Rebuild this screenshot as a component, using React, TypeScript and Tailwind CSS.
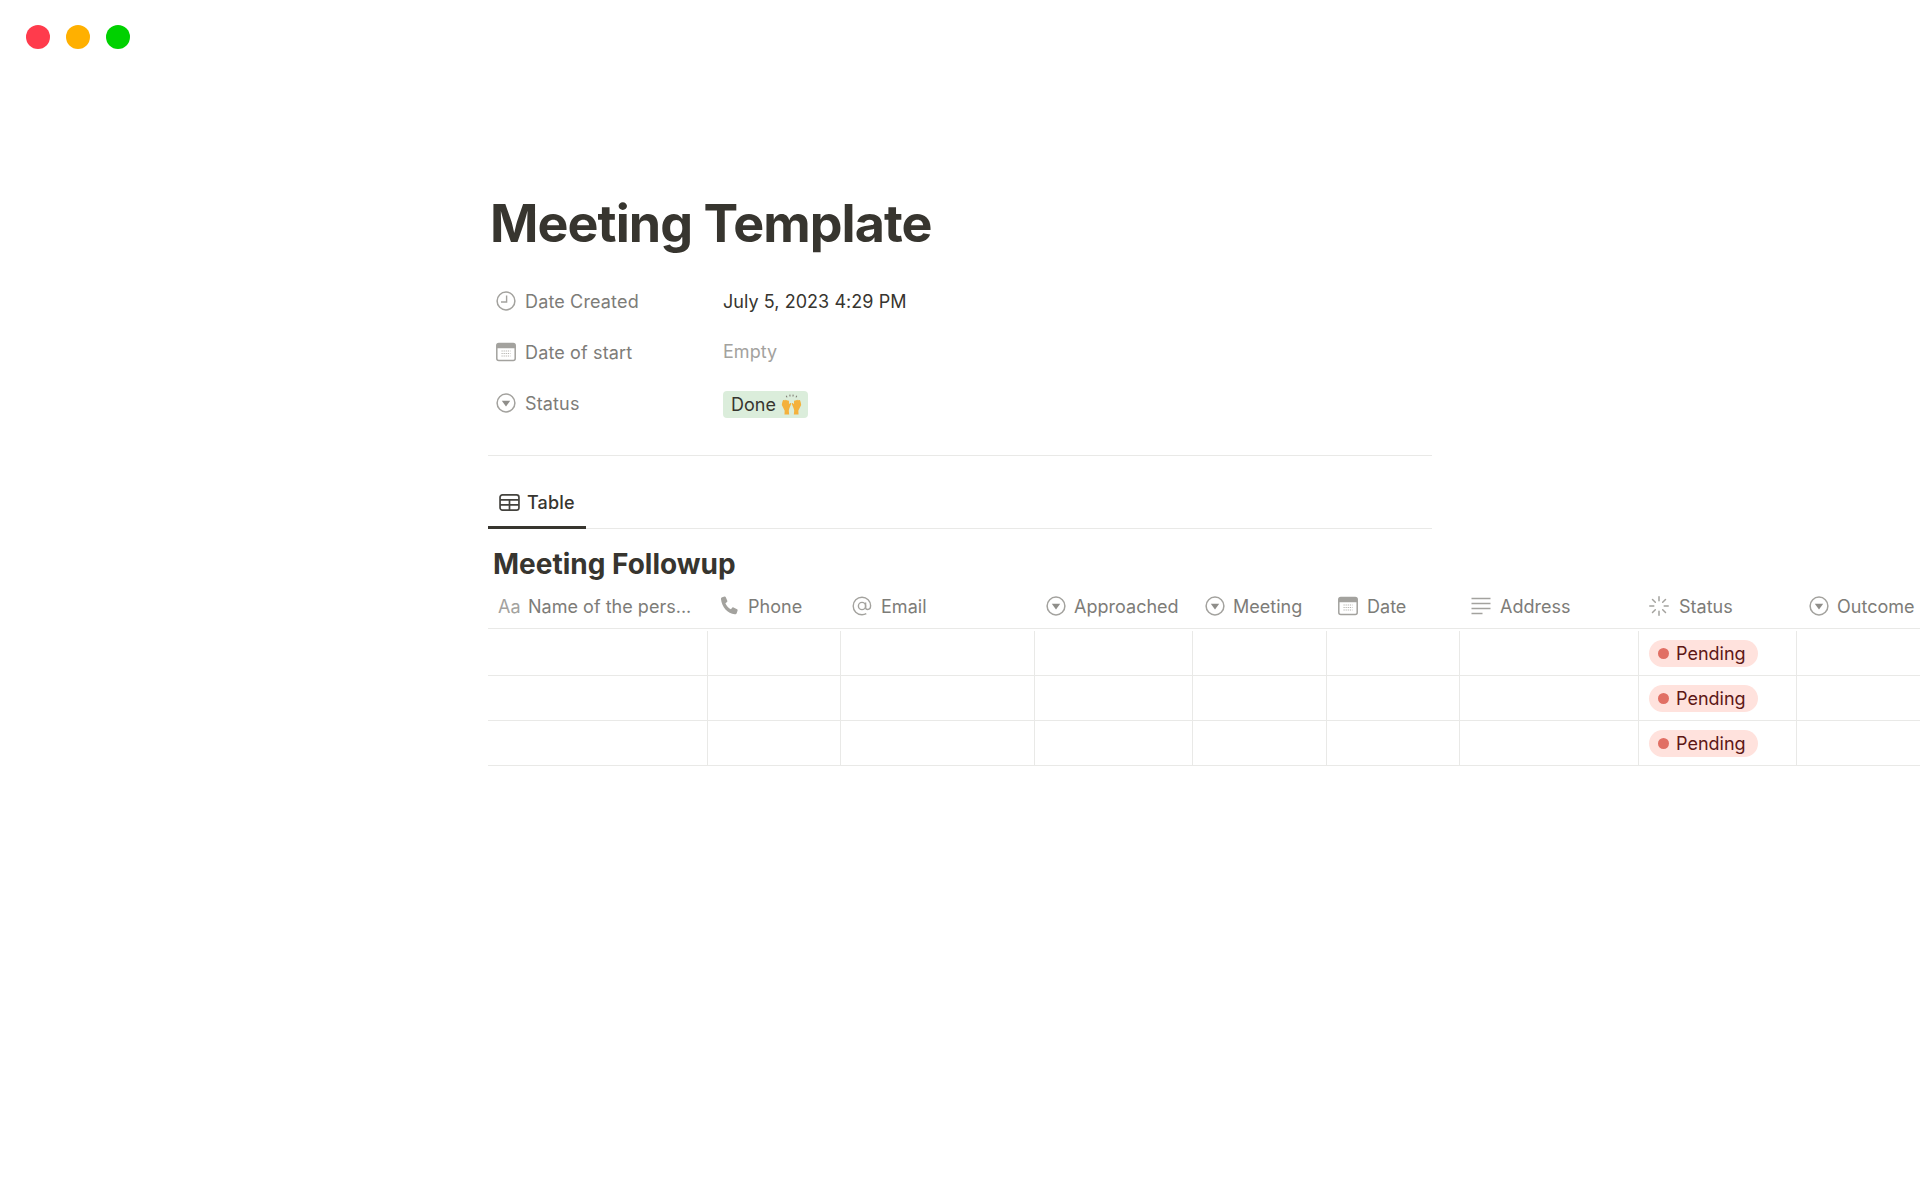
const ClockIcon = ({ className = '' }: { className?: string }) => (
  <svg viewBox="0 0 20 20" className={className} fill="none" stroke="#a3a29e" strokeWidth="1.5">
    <circle cx="10" cy="10" r="8.9" />
    <path d="M10.6 4.400V11H5" strokeWidth="1.4" />
  </svg>
);

const CalendarIcon = ({ className = '' }: { className?: string }) => (
  <svg viewBox="0 0 20 20" className={className}>
    <rect x=".8" y="1.400" width="18.400" height="17.200" rx="2" fill="#fff" stroke="#a3a29e" strokeWidth="1.500" />
    <path d="M.8 3.400a2 2 0 0 1 2-2h14.400a2 2 0 0 1 2 2v2.800H.8z" fill="#a3a29e" />
    <path d="M5.500 9h9M5.500 11.500h9M5.500 14h9" stroke="#b5b4b0" strokeWidth="1.200" strokeDasharray="1.200 .9" />
  </svg>
);

const SelectIcon = ({ className = '' }: { className?: string }) => (
  <svg viewBox="0 0 20 20" className={className} fill="none">
    <circle cx="10" cy="10" r="8.900" stroke="#a3a29e" strokeWidth="1.500" />
    <path d="M5.800 7.800h8.400L10 13.400z" fill="#8f8e8a" />
  </svg>
);

const TableIcon = ({ className = '' }: { className?: string }) => (
  <svg viewBox="0 0 22 18" className={className} fill="none" stroke="#44433e" strokeWidth="1.800">
    <rect x="1" y="1" width="20" height="16" rx="2.500" />
    <path d="M1 6.200h20M1 11.600h20M11 6.200V17" />
  </svg>
);

const PhoneIcon = ({ className = '' }: { className?: string }) => (
  <svg viewBox="0 0 20 20" className={className}>
    <path
      d="M3.200 1.200 5.600.6c.6-.1 1 .1 1.200.6l1.500 3.600c.2.500.1.900-.3 1.200L6.400 7.200c.9 2.300 3.100 4.800 5.500 6l1.300-1.500c.4-.4.800-.5 1.300-.3l3.600 1.800c.5.200.7.700.5 1.200l-.8 2.500c-.3.900-1.100 1.400-2 1.300C8.600 17.400 2.800 11 2 3.200c-.1-.9.300-1.700 1.200-2z"
      fill="#a3a29e"
    />
  </svg>
);

const AtIcon = ({ className = '' }: { className?: string }) => (
  <svg viewBox="0 0 20 20" className={className} fill="none" stroke="#a3a29e" strokeWidth="1.400">
    <circle cx="10" cy="10" r="3.600" />
    <path d="M13.600 6.400V11.300c0 1.300.9 2.200 2.100 2.200 1.500 0 2.900-1.400 2.900-3.900C18.600 5 14.900 1.300 10 1.300S1.200 5.100 1.200 10 5 18.700 10 18.700c1.700 0 3-.3 4.300-1" />
  </svg>
);

const LinesIcon = ({ className = '' }: { className?: string }) => (
  <svg viewBox="0 0 20 18" className={className} stroke="#a3a29e" strokeWidth="1.500">
    <path d="M.5 1.500h19M.5 6.500h19M.5 11.500h19M.5 16.500h11" />
  </svg>
);

const SpinnerIcon = ({ className = '' }: { className?: string }) => (
  <svg viewBox="0 0 20 20" className={className} stroke="#a3a29e" strokeWidth="1.500" strokeLinecap="round">
    <path d="M10 .8v4M10 15.200v4M.8 10h4M15.200 10h4M3.500 3.500l2.800 2.800M13.700 13.700l2.800 2.800M3.500 16.500l2.800-2.800M13.700 6.300l2.800-2.800" />
  </svg>
);

// raising hands emoji, the font has none
const RaisedHands = () => (
  <svg viewBox="0 0 20 20" className="h-[21px] w-[21px]">
    <path
      d="M.8 10.500c0-.8.4-3.200 1-4.400.4-.7 1.200-.5 1.300.2.300-1 1.400-1 1.600-.1.400-.8 1.500-.6 1.600.3.500-.5 1.300-.2 1.300.6v2.600l1-1c.7-.5 1.400.2 1 1L8 13.500l-.6 2.500.4 3.500H3.300l.2-3.500z"
      fill="#f4b13c"
    />
    <path
      d="M19.200 10.500c0-.8-.4-3.200-1-4.400-.4-.7-1.200-.5-1.300.2-.3-1-1.400-1-1.600-.1-.4-.8-1.500-.6-1.600.3-.5-.5-1.300-.2-1.300.6v2.600l-1-1c-.7-.5-1.400.2-1 1l1.600 3.800.6 2.500-.4 3.500h4.500l-.2-3.500z"
      fill="#f4b13c"
    />
    <path d="M5 1.600 5.700 3.200M8.400.6l.2 1.800M11.600.6l-.2 1.800M15 1.600l-.7 1.600" stroke="#7d7a70" strokeWidth="1" />
  </svg>
);

const properties = [
  { Icon: ClockIcon, label: 'Date Created' },
  { Icon: CalendarIcon, label: 'Date of start' },
  { Icon: SelectIcon, label: 'Status' },
];

const columns = [
  { label: 'Name of the pers...', width: 'w-[220px]', pad: 'pl-[10px]', icon: <span className="w-[24px] shrink-0 text-[18px] text-[#a3a29e]">Aa</span>, gap: 'gap-[6px]' },
  { label: 'Phone', width: 'w-[133px]', pad: 'pl-[11px]', icon: <PhoneIcon className="h-5 w-5 shrink-0" />, gap: 'gap-[9px]' },
  { label: 'Email', width: 'w-[194px]', pad: 'pl-[11px]', icon: <AtIcon className="h-5 w-5 shrink-0" />, gap: 'gap-[9px]' },
  { label: 'Approached', width: 'w-[158px]', pad: 'pl-[11px]', icon: <SelectIcon className="h-5 w-5 shrink-0" />, gap: 'gap-[8px]' },
  { label: 'Meeting', width: 'w-[134px]', pad: 'pl-[12px]', icon: <SelectIcon className="h-5 w-5 shrink-0" />, gap: 'gap-[8px]' },
  { label: 'Date', width: 'w-[133px]', pad: 'pl-[11px]', icon: <CalendarIcon className="h-5 w-5 shrink-0" />, gap: 'gap-[9px]' },
  { label: 'Address', width: 'w-[179px]', pad: 'pl-[11px]', icon: <LinesIcon className="h-[18px] w-5 shrink-0" />, gap: 'gap-[9px]' },
  { label: 'Status', width: 'w-[158px]', pad: 'pl-[10px]', icon: <SpinnerIcon className="h-5 w-5 shrink-0" />, gap: 'gap-[10px]' },
  { label: 'Outcome', width: 'w-[150px]', pad: 'pl-[12px]', icon: <SelectIcon className="h-5 w-5 shrink-0" />, gap: 'gap-[8px]' },
];

const App = () => {
  return (
    <div className="h-[1200px] w-[1920px] overflow-hidden bg-white font-['Inter',sans-serif] text-[#37352f]">
      {/* window buttons */}
      <div className="flex gap-[16px] pl-[26px] pt-[25px]">
        <span className="h-6 w-6 rounded-full bg-[#ff3b4c]" />
        <span className="h-6 w-6 rounded-full bg-[#ffb000]" />
        <span className="h-6 w-6 rounded-full bg-[#00d100]" />
      </div>

      <div className="ml-[488px] w-[1432px] pt-[140px]">
        <h1 className="pl-[2px] text-[52px] font-bold leading-[70px] tracking-[-0.95px] text-[#37352f]">
          Meeting Template
        </h1>

        <div className="mt-[22px] flex flex-col gap-[11px]">
          {properties.map(({ Icon, label }, i) => (
            <div key={label} className="flex h-[40px] items-center pl-[8px]">
              <Icon className="h-5 w-5 shrink-0" />
              <span className="ml-[9px] w-[198px] text-[18px] tracking-[0.15px] text-[#7d7c78]">{label}</span>
              {i === 0 && <span className="text-[18px] tracking-[0.05px] text-[#37352f]">July 5, 2023 4:29 PM</span>}
              {i === 1 && <span className="pb-[1px] text-[18px] tracking-[0.05px] text-[#a3a29e]">Empty</span>}
              {i === 2 && (
                <span className="mt-[2px] flex h-[27px] items-center gap-[5px] rounded-[4px] bg-[#dbeddb] pl-2 pr-[6px] text-[18px] text-[#37352f]">
                  Done
                  <RaisedHands />
                </span>
              )}
            </div>
          ))}
        </div>

        <div className="mt-[32px] h-px w-[944px] bg-[#e9e9e7]" />

        <div className="mt-[23px] w-[944px] border-b border-[#e9e9e7]">
          <div className="-mb-px flex h-[50px] w-[98px] items-center gap-[7px] border-b-[3px] border-[#37352f] pl-[11px] text-[18px] font-medium tracking-[0.15px]">
            <TableIcon className="h-[17px] w-[21px] shrink-0" />
            Table
          </div>
        </div>

        <h2 className="mt-[17px] pl-[5px] text-[28px] font-bold leading-[36px]">Meeting Followup</h2>

        <div className="mt-[4px] flex h-[43px] w-[1432px] border-b border-[#e9e9e7] pb-[2px]">
          {columns.map((col) => (
            <div
              key={col.label}
              className={`flex shrink-0 items-center text-[18px] tracking-[0.02px] text-[#7d7c78] ${col.width} ${col.gap} ${col.pad}`}
            >
              {col.icon}
              <span className="whitespace-nowrap">{col.label}</span>
            </div>
          ))}
        </div>

        <div className="mt-[2px]">
          {[0, 1, 2].map((row) => (
            <div key={row} className="flex h-[45px] w-[1432px] border-b border-[#e9e9e7]">
              {columns.map((col) => (
                <div key={col.label} className={`flex shrink-0 items-center border-r border-[#e9e9e7] pl-[10px] ${col.width}`}>
                  {col.label === 'Status' && (
                    <span className="flex h-[27px] items-center gap-[7px] rounded-full bg-[#ffe2dd] pl-[9px] pr-[12px] text-[18px] text-[#5d1715]">
                      <span className="mt-[1px] h-[11px] w-[11px] rounded-full bg-[#e16f64]" />
                      Pending
                    </span>
                  )}
                </div>
              ))}
            </div>
          ))}
        </div>
      </div>
    </div>
  );
};

export default App;
